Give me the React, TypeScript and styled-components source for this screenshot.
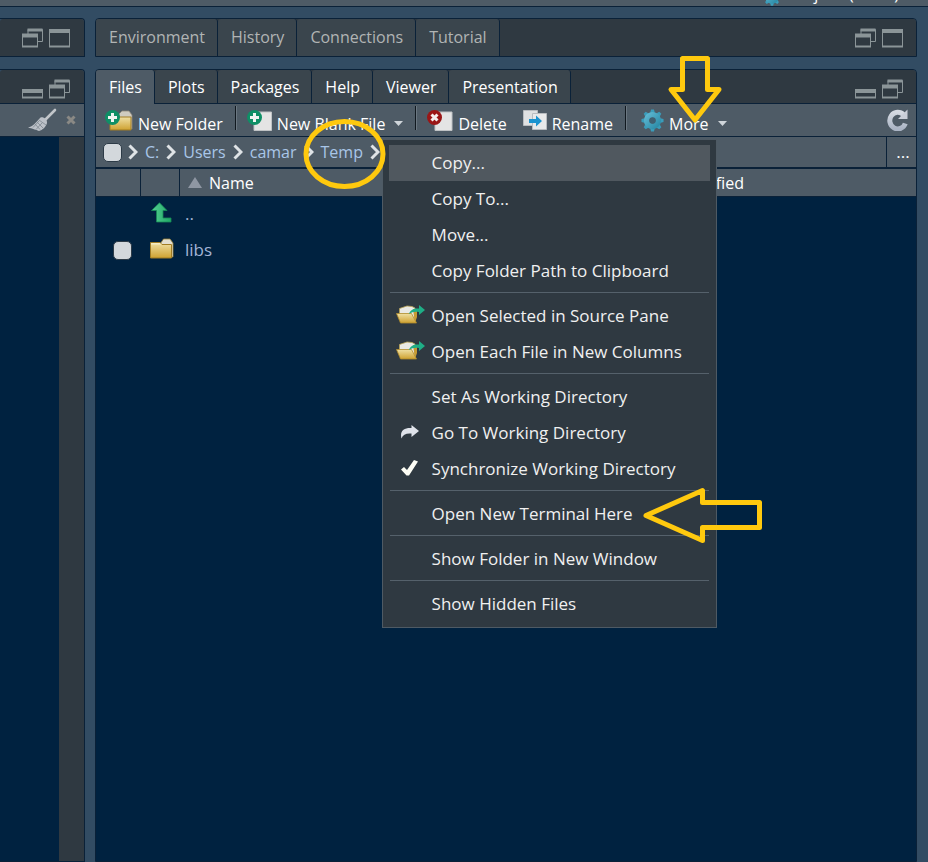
import React from "react";
import styled, { createGlobalStyle, css } from "styled-components";

const color = {
  desk: "#324c63",
  header: "#2f3941",
  tab: "#3a454d",
  bar: "#4e5b66",
  line: "#0a2138",
  body: "#002240",
  edge: "#4e5a64",
  link: "#a9c6e8",
  mark: "#ffc90e",
  glyph: "#8b9598",
};

const Global = createGlobalStyle`
  *, *::before, *::after { box-sizing: border-box; }
  body { margin: 0; background: ${color.desk}; }
  button { font: inherit; color: inherit; background: none; border: 0; padding: 0; cursor: pointer; }
  svg { display: block; flex: none; }
`;

const Shell = styled.div`
  position: relative;
  display: flex;
  flex-direction: column;
  height: 100vh;
  overflow: hidden;
  background: ${color.desk};
  color: #fff;
  font: 16px/24px "Open Sans", "Noto Sans", sans-serif;
  white-space: nowrap;
`;

const TopBar = styled.header`
  flex: none;
  display: flex;
  justify-content: flex-end;
  align-items: flex-end;
  gap: 8px;
  height: 7px;
  padding-right: 29px;
  overflow: hidden;
  background: ${color.bar};
  border-bottom: 1px solid ${color.line};
`;

const Workspace = styled.div`
  flex: 1;
  min-height: 0;
  display: flex;
  gap: 10px;
  padding: 11px 11px 0 0;
`;

const WindowTools = styled.div`
  display: flex;
  align-items: flex-end;
  gap: 6px;
  margin-left: auto;
  padding: 0 13px 4px 0;
`;

const Column = styled.div<{ $side?: boolean }>`
  display: flex;
  flex-direction: column;
  gap: 12px;
  min-width: 0;
  ${(p) =>
    p.$side
      ? css`
          flex: 0 0 85px;
          ${WindowTools} { padding-right: 14px; }
        `
      : css`flex: 1;`}
`;

const Panel = styled.section<{ $fill?: boolean; $cut?: boolean }>`
  display: flex;
  flex-direction: column;
  min-width: 0;
  border: 1px solid ${color.line};
  border-radius: 4px 4px 0 0;
  ${(p) => p.$fill && css`flex: 1; min-height: 0;`}
  ${(p) => p.$cut && css`border-left: 0; border-top-left-radius: 0;`}
`;

const PanelHead = styled.div<{ $tall?: boolean }>`
  flex: none;
  display: flex;
  height: ${(p) => (p.$tall ? 37 : 34)}px;
  background: ${color.header};
  border-radius: 3px 3px 0 0;
  ${(p) =>
    p.$tall
      ? css`${WindowTools} { padding-bottom: 8px; }`
      : css`border-bottom: 1px solid ${color.line};`}
`;

const Tab = styled.button<{ $active?: boolean; $dim?: boolean }>`
  padding: 0 12px 0 13px;
  border-right: 1px solid ${color.line};
  border-radius: 3px 3px 0 0;
  background: ${(p) => (p.$active ? color.bar : color.tab)};
  color: ${(p) => (p.$dim ? "#b1b4b4" : "#fff")};
  ${(p) => p.$active && css`margin-bottom: -1px;`}
  ${(p) => p.$dim && css`padding-bottom: 2px;`}
`;

const IconButton = styled.button`
  display: flex;
  align-items: center;
`;

const Toolbar = styled.div`
  flex: none;
  display: flex;
  align-items: center;
  height: 33px;
  padding: 0 8px 0 9px;
  background: ${color.bar};
  border-bottom: 1px solid ${color.line};
`;

const SideToolbar = styled(Toolbar)`
  justify-content: flex-end;
  gap: 9px;
`;

const SideBody = styled.div`
  flex: 1;
  background: ${color.body};
  border-right: 25px solid ${color.header};
`;

const ToolButton = styled.button`
  display: flex;
  align-items: center;
  gap: 5px;
  height: 32px;
  padding-top: 7px;
  > svg { margin-top: -7px; }
`;

const Divider = styled.span`
  width: 2px;
  height: 24px;
  margin: 0 10px 4px 12px;
  background: linear-gradient(90deg, #10181f 50%, #6b7781 50%);
`;

const RenameSlot = styled.div`
  margin-left: 16px;
`;

const MenuAnchor = styled.div`
  position: relative;
  margin-left: 4px;
`;

const RefreshSlot = styled.div`
  margin-left: auto;
`;

const Menu = styled.div`
  position: absolute;
  z-index: 2;
  top: 35px;
  right: 10px;
  width: 335px;
  padding: 5px 6px;
  background: ${color.header};
  border: 1px solid ${color.edge};
  color: #f0f0f0;
  font-size: 17px;
`;

const MenuItem = styled.button<{ $hot?: boolean }>`
  display: flex;
  align-items: center;
  width: 100%;
  height: 36px;
  background: ${(p) => (p.$hot ? "#50585f" : "transparent")};
`;

const MenuIcon = styled.span`
  flex: none;
  width: 43px;
  padding: 0 0 3px 7px;
`;

const MenuRule = styled.hr`
  height: 1px;
  margin: 3px 1px 5px;
  border: 0;
  background: #55616b;
`;

const PathBar = styled.nav`
  flex: none;
  display: flex;
  align-items: center;
  height: 32px;
  background: ${color.bar};
  border-bottom: 2px solid ${color.line};
`;

const Check = styled.input`
  appearance: none;
  display: block;
  flex: none;
  width: 19px;
  height: 19px;
  margin: 0;
  border: 1px solid #2d3b47;
  border-radius: 5px;
  background: #d3d8dc;
`;

const PathCheck = styled(Check)`
  margin: 0 6px 0 7px;
`;

const Crumb = styled.a`
  color: ${color.link};
  text-decoration: none;
  margin: 0 7px;
`;

const Ellipsis = styled.button`
  align-self: stretch;
  width: 30px;
  margin-left: auto;
  border-left: 1px solid ${color.line};
  padding-left: 3px;
  font-size: 17px;
`;

const Listing = styled.div`
  flex: 1;
  min-height: 0;
  background: ${color.body};
`;

const Table = styled.table`
  width: 100%;
  table-layout: fixed;
  border-collapse: separate;
  border-spacing: 0;
`;

const Th = styled.th<{ $w?: number; $line?: boolean }>`
  width: ${(p) => (p.$w ? `${p.$w}px` : "auto")};
  height: 28px;
  padding: 0 8px;
  font-weight: 400;
  text-align: left;
  background: ${color.bar};
  border-bottom: 1px solid ${color.line};
  ${(p) => p.$line && css`border-right: 1px solid ${color.line};`}
`;

const Sort = styled.button`
  display: flex;
  align-items: center;
  gap: 7px;
`;

const Td = styled.td<{ $pad?: number }>`
  height: 36px;
  padding: 0 0 2px ${(p) => p.$pad ?? 0}px;
  color: #a3b5d6;
  font-size: 17px;
  vertical-align: middle;
  > svg { margin-top: -4px; }
`;

const Name = styled.a`
  color: inherit;
  text-decoration: none;
`;

const Marks = styled.svg`
  position: absolute;
  z-index: 3;
  top: 0;
  left: 0;
  pointer-events: none;
`;

const Holder = styled.div`
  position: absolute;
`;

const Gradients = () => (
  <svg width="0" height="0" aria-hidden="true">
    <defs>
      <linearGradient id="gold" x1="0" y1="0" x2="0" y2="1">
        <stop offset="0" stopColor="#efe0a4" />
        <stop offset="1" stopColor="#cfa231" />
      </linearGradient>
      <linearGradient id="green" x1="0" y1="0" x2="1" y2="0">
        <stop offset="0" stopColor="#55cf92" />
        <stop offset="1" stopColor="#1fa866" />
      </linearGradient>
      <linearGradient id="teal" gradientUnits="userSpaceOnUse" x1="2" y1="2" x2="22" y2="22">
        <stop offset="0" stopColor="#6cc3dc" />
        <stop offset="1" stopColor="#1d7f9c" />
      </linearGradient>
      <linearGradient id="steel" x1="0" y1="0" x2="0" y2="1">
        <stop offset="0" stopColor="#d5dae2" />
        <stop offset="1" stopColor="#aab4c4" />
      </linearGradient>
    </defs>
  </svg>
);

const RestoreIcon = () => (
  <svg width="21" height="20" viewBox="0 0 21 20" fill="none" stroke={color.glyph}>
    <path d="M6 7V1.5H20.5V13.5H15" />
    <path d="M5.5 2H20.5" strokeWidth="3" />
    <path d="M.5 7V18.5H15.5V7" />
    <path d="M0 7.5H16" strokeWidth="4" />
    <path d="M0 18.5H16" strokeWidth="2" />
  </svg>
);

const MaximizeIcon = () => (
  <svg width="21" height="20" viewBox="0 0 21 20" fill="none" stroke={color.glyph}>
    <path d="M.5 2V18.5H20.5V2" />
    <path d="M0 3H21" strokeWidth="4" />
    <path d="M0 18.5H21" strokeWidth="2" />
  </svg>
);

const MinimizeIcon = () => (
  <svg width="21" height="11" viewBox="0 0 21 11" fill="none" stroke={color.glyph}>
    <path d="M.5 2V9.5H20.5V2" />
    <path d="M0 3H21" strokeWidth="4" />
    <path d="M0 9.5H21" strokeWidth="2" />
  </svg>
);

const BroomIcon = () => (
  <svg width="29" height="24" viewBox="0 0 29 24">
    <path d="M27 2 17 12" stroke="#c2c6ca" strokeWidth="2.6" strokeLinecap="round" />
    <path d="M12.5 9.5c3-1 7 2 6.5 5.5-1 4-4.5 7-8 8-2-1-3-1-4.5-1.5C4 20.5 2 20 0 19.500c5-1 8-5 12.500-10z" fill="#bcc1c8" />
    <path d="m11 12 7 5M9 14l6 6M7 16l5 5.500M11 13l-6 6.500M14 15l-6 6.500" stroke="#7c868f" strokeWidth=".8" fill="none" />
  </svg>
);

const CloseIcon = () => (
  <svg width="10" height="10" viewBox="0 0 10 10">
    <path d="m1.500 1.500 7 7m0-7-7 7" stroke="#8a8985" strokeWidth="3" />
  </svg>
);

const Plus = () => (
  <>
    <circle cx="7.500" cy="7.500" r="7.500" fill="#0f8f66" />
    <path d="M7.500 3v9M3 7.500h9" stroke="#f2f5f2" strokeWidth="3" />
  </>
);

const NewFolderIcon = () => (
  <svg width="28" height="21" viewBox="0 0 28 21">
    <path d="M14 8V4l3-3h7l3 4v14H14z" fill="#cfcbc0" stroke="#8f8878" strokeWidth=".8" />
    <path d="M5 7h21v13H5z" fill="url(#gold)" stroke="#a17d24" />
    <Plus />
  </svg>
);

const NewFileIcon = () => (
  <svg width="25" height="21" viewBox="0 0 25 21">
    <path d="M7 2h17.500v18.500H7z" fill="#e4e4e4" stroke="#bfc2c4" />
    <Plus />
  </svg>
);

const DeleteIcon = () => (
  <svg width="26" height="21" viewBox="0 0 26 21">
    <path d="M8 2h17v18.500H8z" fill="#e4e4e4" stroke="#bfc2c4" />
    <circle cx="7.500" cy="7.500" r="7.500" fill="#9a1616" />
    <path d="m4.500 4.500 6 6m0-6-6 6" stroke="#f3eeee" strokeWidth="3" />
  </svg>
);

const RenameIcon = () => (
  <svg width="24" height="20" viewBox="0 0 24 20">
    <path d="M.5.5h14v15H.5z" fill="#dfe1e2" stroke="#b8bcc0" />
    <path d="M9.500 3.500h14v16h-14z" fill="#e8e9ea" stroke="#b8bcc0" />
    <path d="M6 9h7V5.500l6 5.500-6 5.500V13H6z" fill="#1b93cf" />
  </svg>
);

const TEETH = [0, 45, 90, 135, 180, 225, 270, 315];

const GearIcon = ({ size = 23 }: { size?: number }) => (
  <svg width={size} height={size} viewBox="0 0 24 24">
    {TEETH.map((a) => (
      <path key={a} d="M9 6 10.500.500h3L15 6z" fill="#3a9cba" transform={`rotate(${a} 12 12)`} />
    ))}
    <circle cx="12" cy="12" r="6" fill="none" stroke="url(#teal)" strokeWidth="6" />
    <circle cx="12" cy="12" r="3.400" fill="#3f5f70" />
  </svg>
);

const RefreshIcon = () => (
  <svg width="21" height="22" viewBox="0 0 21 22">
    <path d="M16.500 5.800A8 8.300 0 1 0 18.300 14.500" fill="none" stroke="url(#steel)" strokeWidth="5" />
    <path d="M20.500.500v9.500h-9.500z" fill="#c9ced8" />
  </svg>
);

const Caret = () => (
  <svg width="9" height="5" viewBox="0 0 9 5">
    <path d="M0 0h9L4.500 5z" fill="#cfd5da" />
  </svg>
);

const TextCaret = styled.span`
  display: flex;
  margin-left: 4px;
`;

const Chevron = () => (
  <svg width="10" height="16" viewBox="0 0 10 16">
    <path d="M1.500 1.500 8 8l-6.500 6.500" fill="none" stroke="#dfe3e6" strokeWidth="3" />
  </svg>
);

const SortIcon = () => (
  <svg width="14" height="11" viewBox="0 0 14 11">
    <path d="M7 0l7 11H0z" fill="#8f97a3" />
  </svg>
);

const UpIcon = () => (
  <svg width="21" height="21" viewBox="0 0 21 21">
    <path d="M8.500.800 16 8.500h-4v7.500h8v4H5.500V8.500h-5z" fill="url(#green)" stroke="#168a55" strokeWidth=".8" />
  </svg>
);

const FolderIcon = () => (
  <svg width="24" height="21" viewBox="0 0 24 21">
    <path d="M10 6 13.500 1H20l3 4v14H10z" fill="#e3dfd0" stroke="#9a8236" strokeWidth=".8" />
    <path d="M.5 4.500H10l2 2h9.500v13.500H.5z" fill="url(#gold)" stroke="#a17d24" />
    <path d="M1 5h9l1 1.500H1z" fill="#f5edc4" />
  </svg>
);

const OpenFolderIcon = () => (
  <svg width="29" height="19" viewBox="0 0 29 19">
    <path d="M3.500 8V3.500L11 1l5 .5 3 1.500V17H5z" fill="#e9e9e4" stroke="#b9a254" strokeWidth=".8" />
    <path d="M17 4h4v8l-2 6z" fill="#c89c33" />
    <path d="M.5 8.500h15L20.500 18H4.500z" fill="url(#gold)" stroke="#b08b2b" strokeWidth=".8" />
    <path d="M13 9c1-4 5-6 10-5.500V0l6 5-6 5V7c-4-.8-7 0-10 2z" fill="#1fae86" />
  </svg>
);

const GoIcon = () => (
  <svg width="19" height="14" viewBox="0 0 19 14">
    <path d="M1.500 13.500C-.5 6 4 2.500 11.500 3V0L19 6l-7.500 6V8.500C6 8 3 9.500 1.500 13.500z" fill="#dfe3ea" />
  </svg>
);

const TickIcon = () => (
  <svg width="18" height="16" viewBox="0 0 18 16">
    <path d="M1 9.500 4 7l3 3L14 0l4 1.500L9 15.500H6.500z" fill="#fdfdf5" />
  </svg>
);

const IndentedIcon = styled.span`
  display: block;
  margin-left: 4px;
`;

type Entry = { label: string; icon?: React.ReactNode };

const GROUPS: Entry[][] = [
  [{ label: "Copy..." }, { label: "Copy To..." }, { label: "Move..." }, { label: "Copy Folder Path to Clipboard" }],
  [
    { label: "Open Selected in Source Pane", icon: <OpenFolderIcon /> },
    { label: "Open Each File in New Columns", icon: <OpenFolderIcon /> },
  ],
  [
    { label: "Set As Working Directory" },
    { label: "Go To Working Directory", icon: <IndentedIcon><GoIcon /></IndentedIcon> },
    { label: "Synchronize Working Directory", icon: <IndentedIcon><TickIcon /></IndentedIcon> },
  ],
  [{ label: "Open New Terminal Here" }],
  [{ label: "Show Folder in New Window" }],
  [{ label: "Show Hidden Files" }],
];

const TopTools = () => (
  <WindowTools>
    <IconButton aria-label="Restore"><RestoreIcon /></IconButton>
    <IconButton aria-label="Maximize"><MaximizeIcon /></IconButton>
  </WindowTools>
);

const BottomTools = () => (
  <WindowTools>
    <IconButton aria-label="Minimize"><MinimizeIcon /></IconButton>
    <IconButton aria-label="Restore"><RestoreIcon /></IconButton>
  </WindowTools>
);

const TOP_TABS = ["Environment", "History", "Connections", "Tutorial"];
const BOTTOM_TABS = ["Files", "Plots", "Packages", "Help", "Viewer", "Presentation"];

export default function App() {
  return (
    <Shell>
      <Global />
      <Holder><Gradients /></Holder>
      <TopBar>
        <GearIcon size={18} />
        <span>Project: (None)</span>
      </TopBar>
      <Workspace>
        <Column $side>
          <Panel $cut>
            <PanelHead $tall><TopTools /></PanelHead>
          </Panel>
          <Panel $cut $fill>
            <PanelHead><BottomTools /></PanelHead>
            <SideToolbar>
              <IconButton aria-label="Clear"><BroomIcon /></IconButton>
              <IconButton aria-label="Close"><CloseIcon /></IconButton>
            </SideToolbar>
            <SideBody />
          </Panel>
        </Column>
        <Column>
          <Panel>
            <PanelHead $tall>
              {TOP_TABS.map((t) => (
                <Tab key={t} $dim>{t}</Tab>
              ))}
              <TopTools />
            </PanelHead>
          </Panel>
          <Panel $fill>
            <PanelHead>
              {BOTTOM_TABS.map((t) => (
                <Tab key={t} $active={t === "Files"}>{t}</Tab>
              ))}
              <BottomTools />
            </PanelHead>
            <Toolbar>
              <ToolButton><NewFolderIcon />New Folder</ToolButton>
              <Divider />
              <ToolButton>
                <NewFileIcon />New Blank File<TextCaret><Caret /></TextCaret>
              </ToolButton>
              <Divider />
              <ToolButton><DeleteIcon />Delete</ToolButton>
              <RenameSlot>
                <ToolButton><RenameIcon />Rename</ToolButton>
              </RenameSlot>
              <Divider />
              <MenuAnchor>
                <ToolButton aria-haspopup="menu" aria-expanded="true">
                  <GearIcon />More<TextCaret><Caret /></TextCaret>
                </ToolButton>
                <Menu role="menu">
                  {GROUPS.map((group, g) => (
                    <React.Fragment key={g}>
                      {g > 0 && <MenuRule />}
                      {group.map((e) => (
                        <MenuItem key={e.label} role="menuitem" $hot={e.label === "Copy..."}>
                          <MenuIcon>{e.icon}</MenuIcon>
                          {e.label}
                        </MenuItem>
                      ))}
                    </React.Fragment>
                  ))}
                </Menu>
              </MenuAnchor>
              <RefreshSlot>
                <IconButton aria-label="Refresh"><RefreshIcon /></IconButton>
              </RefreshSlot>
            </Toolbar>
            <PathBar aria-label="Path">
              <PathCheck type="checkbox" aria-label="Select all files" />
              <Chevron />
              {["C:", "Users", "camar", "Temp"].map((c) => (
                <React.Fragment key={c}>
                  <Crumb href="#">{c}</Crumb>
                  <Chevron />
                </React.Fragment>
              ))}
              <Ellipsis aria-label="Go to directory">...</Ellipsis>
            </PathBar>
            <Listing>
              <Table>
                <thead>
                  <tr>
                    <Th $w={45} $line />
                    <Th $w={39} $line />
                    <Th $w={384}><Sort><SortIcon />Name</Sort></Th>
                    <Th $w={106} aria-label="Size" />
                    <Th>Modified</Th>
                  </tr>
                </thead>
                <tbody>
                  <tr>
                    <Td />
                    <Td $pad={10}><UpIcon /></Td>
                    <Td $pad={5} colSpan={3}><Name href="#">..</Name></Td>
                  </tr>
                  <tr>
                    <Td $pad={17}><Check type="checkbox" aria-label="Select libs" /></Td>
                    <Td $pad={9}><FolderIcon /></Td>
                    <Td $pad={5} colSpan={3}><Name href="#">libs</Name></Td>
                  </tr>
                </tbody>
              </Table>
            </Listing>
          </Panel>
        </Column>
      </Workspace>
      <Marks width="928" height="862" viewBox="0 0 928 862" fill="none" stroke={color.mark} strokeWidth="5" strokeLinejoin="round" aria-hidden="true">
        <ellipse cx="344.500" cy="154" rx="38.500" ry="32.500" />
        <path d="M682.500 58.500H707.500V89.500H719L695 120 671 89.500H682.500Z" />
        <path d="M646 515.500 702.500 490.500V502.500H759.500V527.500H702.500V540.500Z" />
      </Marks>
    </Shell>
  );
}
